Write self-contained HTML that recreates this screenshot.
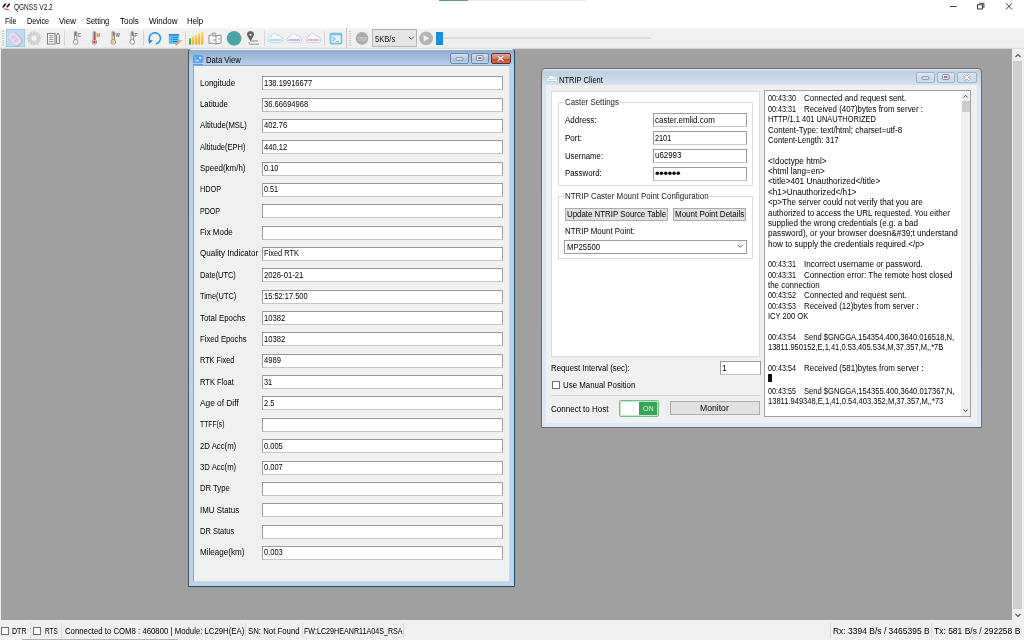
<!DOCTYPE html><html><head><meta charset="utf-8"><style>
*{box-sizing:border-box;margin:0;padding:0}
html,body{width:1024px;height:640px;overflow:hidden;background:#fff;font-family:"Liberation Sans",sans-serif;font-size:8.5px;letter-spacing:-0.25px;color:#000}
.a{position:absolute}
.t{position:absolute;white-space:nowrap;line-height:10px;height:10px;filter:grayscale(1)}
.inp{position:absolute;background:#fff;border:1px solid #9c9c9c;border-bottom-color:#c6c6c6}
.vs{position:absolute;width:1px;background:#dadada}
svg{position:absolute;overflow:visible}
</style></head><body>
<div class="a" style="left:0px;top:0px;width:1024px;height:28px;background:#fff"></div>
<div class="a" style="left:439px;top:0px;width:29px;height:1px;background:#5a9a80"></div>
<div class="a" style="left:468px;top:0px;width:118px;height:1px;background:#e6e6e6"></div>
<div class="a" style="left:0px;top:28px;width:1024px;height:21px;background:linear-gradient(#f7f7f7,#f0f0f0 2px,#f0f0f0 19px,#d8d8d8)"></div>
<div class="a" style="left:1px;top:49px;width:1011px;height:571px;background:#a0a0a0"></div>
<div class="a" style="left:0px;top:49px;width:1px;height:571px;background:#f0f0f0"></div>
<div class="a" style="left:1012px;top:49px;width:12px;height:571px;background:#f0f0f0"></div>
<div class="a" style="left:1013px;top:61px;width:9px;height:548px;background:#cdcdcd"></div>
<svg style="left:1012px;top:49px" width="12" height="571" viewBox="0 0 12 571"><path d="M3.5 8 L6 5.5 L8.5 8" fill="none" stroke="#555" stroke-width="1.2"/><path d="M3.5 565 L6 567.5 L8.5 565" fill="none" stroke="#555" stroke-width="1.2"/></svg>
<div class="a" style="left:0px;top:620px;width:1024px;height:20px;background:#f0f0f0"></div>
<div class="a" style="left:22px;top:639px;width:156px;height:1px;background:#b4b4b4"></div>
<svg style="left:1px;top:2px" width="11" height="9" viewBox="0 0 11 9"><path d="M1 5.6 L3.2 2.2 Q3.6 1.6 4.4 1.6 L5.6 1.6 L3 5.6 Z" fill="#111"/><path d="M5.2 5 L7.2 1.9 Q7.5 1.5 8.2 1.5 L8.8 1.5 Q9.4 1.7 9 2.4 L7.4 4.8 Q7 5.4 6.2 5.4 Z" fill="#111"/><path d="M2.6 6.2 Q6 6.3 9.8 8.6 Q6.5 8 3.6 7.4 Z" fill="#e82020"/></svg>
<div class="t" style="left:13.90px;top:1.65px;font-size:8.4px;color:#111;letter-spacing:0;transform:scaleX(0.7769);transform-origin:0 0">QGNSS V2.2</div>
<svg style="left:940px;top:0px" width="84" height="14" viewBox="0 0 84 14"><path d="M10 6.5 H16.7" stroke="#222" stroke-width="0.9"/><path d="M39.2 3.3 h4.7 v4.6" fill="none" stroke="#222" stroke-width="0.9"/><rect x="37.5" y="4.8" width="5" height="4.2" fill="none" stroke="#222" stroke-width="0.9"/><path d="M66 3.3 L72 9.4 M72 3.3 L66 9.4" stroke="#222" stroke-width="0.9"/></svg>
<div class="t" style="left:4.70px;top:15.65px;color:#000;letter-spacing:0;transform:scaleX(0.8319);transform-origin:0 0">File</div>
<div class="t" style="left:26.80px;top:15.65px;color:#000;letter-spacing:0;transform:scaleX(0.8505);transform-origin:0 0">Device</div>
<div class="t" style="left:58.90px;top:15.65px;color:#000;letter-spacing:0;transform:scaleX(0.9190);transform-origin:0 0">View</div>
<div class="t" style="left:85.80px;top:15.65px;color:#000;letter-spacing:0;transform:scaleX(0.8765);transform-origin:0 0">Setting</div>
<div class="t" style="left:119.80px;top:15.65px;color:#000;letter-spacing:0;transform:scaleX(0.9524);transform-origin:0 0">Tools</div>
<div class="t" style="left:148.80px;top:15.65px;color:#000;letter-spacing:0;transform:scaleX(0.9426);transform-origin:0 0">Window</div>
<div class="t" style="left:186.90px;top:15.65px;color:#000;letter-spacing:0;transform:scaleX(0.9265);transform-origin:0 0">Help</div>
<svg style="left:1px;top:29px" width="4" height="19" viewBox="0 0 4 19"><rect x="1.5" y="2.0" width="1.2" height="1" fill="#a8a8a8"/><rect x="1.5" y="4.3" width="1.2" height="1" fill="#a8a8a8"/><rect x="1.5" y="6.6" width="1.2" height="1" fill="#a8a8a8"/><rect x="1.5" y="8.9" width="1.2" height="1" fill="#a8a8a8"/><rect x="1.5" y="11.2" width="1.2" height="1" fill="#a8a8a8"/><rect x="1.5" y="13.5" width="1.2" height="1" fill="#a8a8a8"/><rect x="1.5" y="15.8" width="1.2" height="1" fill="#a8a8a8"/></svg>
<svg style="left:348px;top:29px" width="4" height="19" viewBox="0 0 4 19"><rect x="1.5" y="2.0" width="1.2" height="1" fill="#a8a8a8"/><rect x="1.5" y="4.3" width="1.2" height="1" fill="#a8a8a8"/><rect x="1.5" y="6.6" width="1.2" height="1" fill="#a8a8a8"/><rect x="1.5" y="8.9" width="1.2" height="1" fill="#a8a8a8"/><rect x="1.5" y="11.2" width="1.2" height="1" fill="#a8a8a8"/><rect x="1.5" y="13.5" width="1.2" height="1" fill="#a8a8a8"/><rect x="1.5" y="15.8" width="1.2" height="1" fill="#a8a8a8"/></svg>
<div class="a" style="left:6px;top:29px;width:19px;height:18px;background:#c4dcf2;border:1px solid #9dccf3"></div>
<svg style="left:7px;top:31px" width="17" height="16" viewBox="0 0 17 16"><g transform="rotate(-42 8.5 8)"><rect x="3.6" y="1" width="9.8" height="14.5" rx="3.6" fill="#b8b2cc"/><rect x="3.6" y="0.6" width="9" height="13.6" rx="3.4" fill="#e6e3f0" stroke="#c4bfd6" stroke-width="0.5"/><rect x="5.8" y="3.6" width="4.6" height="3.2" rx="0.6" fill="#d2cde2"/><rect x="5.8" y="8" width="4.6" height="3.2" rx="0.6" fill="#d2cde2"/></g></svg>
<svg style="left:27px;top:31px" width="15" height="15" viewBox="0 0 15 15"><g transform="translate(7 7.35)"><rect x="-1.3" y="-7" width="2.6" height="3" fill="#cdcdcd" transform="rotate(0)"/><rect x="-1.3" y="-7" width="2.6" height="3" fill="#cdcdcd" transform="rotate(30)"/><rect x="-1.3" y="-7" width="2.6" height="3" fill="#cdcdcd" transform="rotate(60)"/><rect x="-1.3" y="-7" width="2.6" height="3" fill="#cdcdcd" transform="rotate(90)"/><rect x="-1.3" y="-7" width="2.6" height="3" fill="#cdcdcd" transform="rotate(120)"/><rect x="-1.3" y="-7" width="2.6" height="3" fill="#cdcdcd" transform="rotate(150)"/><rect x="-1.3" y="-7" width="2.6" height="3" fill="#cdcdcd" transform="rotate(180)"/><rect x="-1.3" y="-7" width="2.6" height="3" fill="#cdcdcd" transform="rotate(210)"/><rect x="-1.3" y="-7" width="2.6" height="3" fill="#cdcdcd" transform="rotate(240)"/><rect x="-1.3" y="-7" width="2.6" height="3" fill="#cdcdcd" transform="rotate(270)"/><rect x="-1.3" y="-7" width="2.6" height="3" fill="#cdcdcd" transform="rotate(300)"/><rect x="-1.3" y="-7" width="2.6" height="3" fill="#cdcdcd" transform="rotate(330)"/><circle r="5.3" fill="#d2d2d2"/><circle r="3.4" fill="#dcdcdc"/><circle r="2.4" fill="#f2f2f2"/></g></svg>
<svg style="left:46px;top:32px" width="15" height="13" viewBox="0 0 15 13"><rect x="1.5" y="1.5" width="7.5" height="10.5" fill="#fff" stroke="#7c7c7c" stroke-width="1"/><path d="M3 3.5 h4.5 M3 5.5 h4.5 M3 7.5 h4.5 M3 9.5 h4.5" stroke="#8a8a8a" stroke-width="0.9"/><path d="M10.5 3.5 L12 1 L13.5 3.5 V11.5 H10.5Z" fill="#e8e8e8" stroke="#7c7c7c" stroke-width="0.9"/></svg>
<div class="a" style="left:64px;top:31px;width:1px;height:15px;background:#d4d4d4"></div>
<div class="a" style="left:143px;top:31px;width:1px;height:15px;background:#d4d4d4"></div>
<div class="a" style="left:185px;top:31px;width:1px;height:15px;background:#d4d4d4"></div>
<div class="a" style="left:264px;top:31px;width:1px;height:15px;background:#d4d4d4"></div>
<div class="a" style="left:324px;top:31px;width:1px;height:15px;background:#d4d4d4"></div>
<div class="a" style="left:346px;top:28px;width:1px;height:20px;background:#c8c8c8"></div>
<svg style="left:70px;top:31px" width="70" height="15" viewBox="0 0 70 15"><rect x="4.3999999999999995" y="0.5" width="2.4" height="9" rx="1.2" fill="#fff" stroke="#777" stroke-width="0.8"/><rect x="5.1" y="1" width="1" height="4" fill="#666"/><circle cx="5.6" cy="11" r="2.3" fill="#fff" stroke="#777" stroke-width="0.8"/><text x="7.8" y="5.5" font-size="4.6" font-weight="bold" fill="#707070" letter-spacing="0" font-family="Liberation Sans">C</text><rect x="23.2" y="0.5" width="2.4" height="9" rx="1.2" fill="#fff" stroke="#777" stroke-width="0.8"/><rect x="23.9" y="1" width="1" height="4" fill="#666"/><rect x="23.9" y="5" width="1" height="5" fill="#e02020"/><circle cx="24.4" cy="11" r="2.3" fill="#fff" stroke="#777" stroke-width="0.8"/><circle cx="24.4" cy="11" r="1.2" fill="#e02020"/><text x="26.599999999999998" y="5.5" font-size="4.6" font-weight="bold" fill="#707070" letter-spacing="0" font-family="Liberation Sans">H</text><rect x="42.099999999999994" y="0.5" width="2.4" height="9" rx="1.2" fill="#fff" stroke="#777" stroke-width="0.8"/><rect x="42.8" y="1" width="1" height="4" fill="#666"/><rect x="42.8" y="5" width="1" height="5" fill="#f0c020"/><circle cx="43.3" cy="11" r="2.3" fill="#fff" stroke="#777" stroke-width="0.8"/><circle cx="43.3" cy="11" r="1.2" fill="#f0c020"/><text x="45.5" y="5.5" font-size="4.6" font-weight="bold" fill="#707070" letter-spacing="0" font-family="Liberation Sans">W</text><rect x="61.099999999999994" y="0.5" width="2.4" height="9" rx="1.2" fill="#fff" stroke="#777" stroke-width="0.8"/><rect x="61.8" y="1" width="1" height="4" fill="#666"/><circle cx="62.3" cy="11" r="2.3" fill="#fff" stroke="#777" stroke-width="0.8"/><text x="64.5" y="5.5" font-size="4.6" font-weight="bold" fill="#707070" letter-spacing="0" font-family="Liberation Sans">F</text></svg>
<svg style="left:147px;top:31px" width="16" height="15" viewBox="0 0 16 15"><path d="M8.77 12.86 A5.6 5.6 0 1 0 2.9 9.9" fill="none" stroke="#1e90dc" stroke-width="1.5"/><path d="M1.2 8.6 L5.8 9.6 L2.2 12.9 Z" fill="#1e90dc"/></svg>
<svg style="left:166px;top:31px" width="17" height="16" viewBox="0 0 17 16"><rect x="0.5" y="0.5" width="15" height="15" fill="#fbf0d8" opacity="0.45"/><rect x="2.8" y="3" width="10.2" height="10" rx="1" fill="#5cc6f4"/><rect x="2.8" y="3" width="10.2" height="1.6" fill="#3d7fe0"/><rect x="4.6" y="6" width="1.2" height="1" fill="#2f78c8"/><rect x="6.8" y="6" width="4.8" height="1" fill="#2f78c8"/><rect x="4.6" y="8" width="1.2" height="1" fill="#2f78c8"/><rect x="6.8" y="8" width="4.8" height="1" fill="#2f78c8"/><rect x="4.6" y="10" width="1.2" height="1" fill="#2f78c8"/><rect x="6.8" y="10" width="4.8" height="1" fill="#2f78c8"/><path d="M9.5 14.5 L14.5 9.5" stroke="#f0a040" stroke-width="1.6"/><path d="M14 10 L15 9" stroke="#f08aa0" stroke-width="1.6"/></svg>
<svg style="left:188px;top:31px" width="17" height="15" viewBox="0 0 17 15"><defs><linearGradient id="go" x1="0" y1="0" x2="0" y2="1"><stop offset="0" stop-color="#fcd94e"/><stop offset="1" stop-color="#f5a016"/></linearGradient><linearGradient id="gg" x1="0" y1="0" x2="0" y2="1"><stop offset="0" stop-color="#6ab04c"/><stop offset="1" stop-color="#2a9a3a"/></linearGradient></defs><rect x="1.1" y="7.0" width="2" height="6.8" rx="0.8" fill="url(#gg)"/><rect x="4.1" y="5.0" width="2" height="8.8" rx="0.8" fill="url(#go)"/><rect x="7.1" y="3.8" width="2" height="10.0" rx="0.8" fill="url(#go)"/><rect x="10.1" y="2.2" width="2" height="11.6" rx="0.8" fill="url(#go)"/><rect x="13.2" y="0.7" width="2" height="13.1" rx="0.8" fill="url(#go)"/></svg>
<svg style="left:208px;top:32px" width="15" height="13" viewBox="0 0 15 13"><path d="M1 3.5 L4.5 3 L8 4 L13 3 V11 L8 12 L4.5 11 L1 11.5Z" fill="#fff" stroke="#808080" stroke-width="0.9"/><path d="M8 4 V12 M4.5 8 L8 8 M10 7 h2" stroke="#808080" stroke-width="0.8"/><circle cx="6" cy="2.5" r="1.6" fill="#fff" stroke="#666" stroke-width="0.8"/></svg>
<svg style="left:226px;top:30px" width="17" height="17" viewBox="0 0 17 17"><circle cx="8.1" cy="8.35" r="7.3" fill="#4aa5a4"/></svg>
<svg style="left:246px;top:31px" width="15" height="15" viewBox="0 0 15 15"><path d="M4.5 10.3 L1.6 5.2 A3.4 3.4 0 1 1 7.4 5.2 Z" fill="#606060"/><circle cx="4.5" cy="3.8" r="1.1" fill="#f0f0f0"/><path d="M4 10 H12" stroke="#999" stroke-width="1.2"/><path d="M3.2 11.2 Q2.5 13.2 4 13.2 H13" fill="none" stroke="#888" stroke-width="0.9"/></svg>
<svg style="left:267px;top:33px" width="60" height="10" viewBox="0 0 60 10"><g transform="translate(0 0)"><g fill="#fff" stroke="#8fa2d8" stroke-width="1"><rect x="1.2" y="4.6" width="14.6" height="4.3" rx="2.15"/><circle cx="7.6" cy="4.2" r="3.1"/><circle cx="11.6" cy="5.3" r="2.3"/><circle cx="4.3" cy="5.7" r="1.9"/></g><g fill="#fff"><rect x="1.2" y="4.6" width="14.6" height="4.3" rx="2.15"/><circle cx="7.6" cy="4.2" r="3.1"/><circle cx="11.6" cy="5.3" r="2.3"/><circle cx="4.3" cy="5.7" r="1.9"/></g><path d="M2.6 6.9 H14.4" stroke="#3fb8ec" stroke-width="1.5" stroke-dasharray="1.2 0.45" opacity="0.9"/></g><g transform="translate(19 0)"><g fill="#fff" stroke="#8fa2d8" stroke-width="1"><rect x="1.2" y="4.6" width="14.6" height="4.3" rx="2.15"/><circle cx="7.6" cy="4.2" r="3.1"/><circle cx="11.6" cy="5.3" r="2.3"/><circle cx="4.3" cy="5.7" r="1.9"/></g><g fill="#fff"><rect x="1.2" y="4.6" width="14.6" height="4.3" rx="2.15"/><circle cx="7.6" cy="4.2" r="3.1"/><circle cx="11.6" cy="5.3" r="2.3"/><circle cx="4.3" cy="5.7" r="1.9"/></g><path d="M2.6 6.9 H14.4" stroke="#7a6ed8" stroke-width="1.5" stroke-dasharray="1.2 0.45" opacity="0.9"/></g><g transform="translate(38 0)"><g fill="#fff" stroke="#8fa2d8" stroke-width="1"><rect x="1.2" y="4.6" width="14.6" height="4.3" rx="2.15"/><circle cx="7.6" cy="4.2" r="3.1"/><circle cx="11.6" cy="5.3" r="2.3"/><circle cx="4.3" cy="5.7" r="1.9"/></g><g fill="#fff"><rect x="1.2" y="4.6" width="14.6" height="4.3" rx="2.15"/><circle cx="7.6" cy="4.2" r="3.1"/><circle cx="11.6" cy="5.3" r="2.3"/><circle cx="4.3" cy="5.7" r="1.9"/></g><path d="M2.6 6.9 H14.4" stroke="#d06a6a" stroke-width="1.5" stroke-dasharray="1.2 0.45" opacity="0.9"/></g></svg>
<svg style="left:329px;top:32px" width="14" height="13" viewBox="0 0 14 13"><rect x="1.5" y="1.5" width="11" height="10.2" rx="1.2" fill="none" stroke="#70c0ec" stroke-width="1.7"/><rect x="1.5" y="1.5" width="11" height="1.8" fill="#70c0ec"/><path d="M3.5 5 L6 7 L3.5 9" fill="none" stroke="#70c0ec" stroke-width="1.2"/><path d="M7.2 9.6 H10" stroke="#70c0ec" stroke-width="1"/></svg>
<svg style="left:355px;top:31px" width="15" height="15" viewBox="0 0 15 15"><circle cx="7" cy="7.35" r="6.3" fill="#aaaaaa"/><text x="2.4" y="9.5" font-size="5.8" font-weight="bold" fill="#d2d2d2" letter-spacing="0" textLength="9.4" lengthAdjust="spacingAndGlyphs" font-family="Liberation Sans">STOP</text></svg>
<div class="a" style="left:372px;top:29px;width:45px;height:18px;background:#e5e5e5;border:1px solid #b4b4b4"></div>
<div class="t" style="left:374.50px;top:33.95px;font-size:8.8px;color:#111;letter-spacing:0;transform:scaleX(0.8644);transform-origin:0 0">5KB/s</div>
<svg style="left:408px;top:36px" width="7" height="5" viewBox="0 0 7 5"><path d="M0.8 0.8 L3.3 3.3 L5.8 0.8" fill="none" stroke="#555" stroke-width="1"/></svg>
<svg style="left:418px;top:30px" width="16" height="17" viewBox="0 0 16 17"><circle cx="8.1" cy="8.35" r="6.9" fill="#b4b4b4"/><path d="M5.6 5 L11.2 8.35 L5.6 11.7Z" fill="#efefef"/></svg>
<div class="a" style="left:442px;top:37px;width:209px;height:2px;background:#dcdcdc"></div>
<div class="a" style="left:436px;top:32px;width:6.5px;height:13px;background:#1a8fdc"></div>
<div class="t" style="left:12.20px;top:625.75px;font-size:9.1px;letter-spacing:0;transform:scaleX(0.7753);transform-origin:0 0">DTR</div>
<div class="t" style="left:44.80px;top:625.75px;font-size:9.1px;letter-spacing:0;transform:scaleX(0.7043);transform-origin:0 0">RTS</div>
<div class="t" style="left:64.90px;top:625.75px;font-size:9.1px;letter-spacing:0;transform:scaleX(0.8554);transform-origin:0 0">Connected to COM8 : 460800 | Module: LC29H(EA)</div>
<div class="t" style="left:248.20px;top:625.75px;font-size:9.1px;letter-spacing:0;transform:scaleX(0.8578);transform-origin:0 0">SN: Not Found</div>
<div class="t" style="left:304.40px;top:625.75px;font-size:9.1px;letter-spacing:0;transform:scaleX(0.7856);transform-origin:0 0">FW:LC29HEANR11A04S_RSA</div>
<div class="t" style="left:833.40px;top:625.75px;font-size:9.1px;letter-spacing:0;transform:scaleX(0.9321);transform-origin:0 0">Rx: 3394 B/s / 3465395 B</div>
<div class="t" style="left:933.90px;top:625.75px;font-size:9.1px;letter-spacing:0;transform:scaleX(0.9328);transform-origin:0 0">Tx: 581 B/s / 292258 B</div>
<div class="vs" style="left:30px;top:623px;height:15px"></div>
<div class="vs" style="left:61px;top:623px;height:15px"></div>
<div class="vs" style="left:245px;top:623px;height:15px"></div>
<div class="vs" style="left:302px;top:623px;height:15px"></div>
<div class="vs" style="left:403px;top:623px;height:15px"></div>
<div class="vs" style="left:830px;top:623px;height:15px"></div>
<div class="vs" style="left:931px;top:623px;height:15px"></div>
<div class="a" style="left:1px;top:627px;width:8px;height:8px;background:#fff;border:1px solid #707070"></div>
<div class="a" style="left:33px;top:627px;width:8px;height:8px;background:#fff;border:1px solid #707070"></div>
<div class="a" style="left:188px;top:49px;width:327px;height:538px;background:linear-gradient(#f4f7fb,#f4f7fb 1px,#91adcf 1.5px,#b8d2ec 16px,#bad3ec 17px,#bcd4ec);border:1px solid #4a5560;border-top:0;border-right-color:#1f4f60;border-bottom-color:#1f4f60;border-radius:3px 3px 0 0"></div>
<div class="a" style="left:0px;top:48px;width:188px;height:1px;background:#d4d4d4"></div>
<div class="a" style="left:515px;top:48px;width:497px;height:1px;background:#d4d4d4"></div>
<div class="a" style="left:193px;top:65px;width:317px;height:517px;background:#f0f0f0;border:1px solid #9aa4b0;border-bottom-color:#c8d8e8;border-right-color:#c8d8e8"></div>
<div class="a" style="left:193px;top:63.5px;width:10px;height:1.5px;background:#5aa0f0"></div>
<svg style="left:193px;top:55px" width="10" height="8" viewBox="0 0 10 8"><rect x="0" y="0" width="10" height="8" rx="1.5" fill="#58a2f2"/><rect x="1.8" y="5.3" width="4.2" height="0.9" fill="#fff"/><rect x="6.3" y="2" width="1.8" height="1.8" fill="#fff"/><rect x="1.8" y="2" width="1" height="1.6" fill="#dfe" opacity="0.7"/></svg>
<div class="t" style="left:205.80px;top:54.65px;color:#000;font-size:8.6px;letter-spacing:0;transform:scaleX(0.8920);transform-origin:0 0">Data View</div>
<div class="a" style="left:450px;top:52.5px;width:19px;height:11px;background:linear-gradient(#d0e0f2,#b8cde6 50%,#a8c0de 51%,#bcd2ec);border:1px solid #6f87a8;border-radius:2px"></div>
<div class="a" style="left:470.7px;top:52.5px;width:18.5px;height:11px;background:linear-gradient(#d0e0f2,#b8cde6 50%,#a8c0de 51%,#bcd2ec);border:1px solid #6f87a8;border-radius:2px"></div>
<div class="a" style="left:491px;top:52.5px;width:19.5px;height:11px;background:linear-gradient(#e9a493,#d97a62 50%,#c5452a 51%,#d8694a);border:1px solid #5a3030;border-radius:2px"></div>
<svg style="left:450px;top:52.5px" width="60" height="11" viewBox="0 0 60 11"><rect x="6" y="4.7" width="7" height="2.6" rx="1" fill="#eef" stroke="#555" stroke-width="0.6"/><rect x="26.5" y="2.5" width="6.5" height="5" rx="1" fill="#eef" stroke="#555" stroke-width="0.6"/><rect x="28" y="4.2" width="3.5" height="1.6" fill="#667"/><path d="M47.8 3 L53.6 8 M53.6 3 L47.8 8" stroke="#444" stroke-width="2.4" opacity="0.55"/><path d="M47.8 3 L53.6 8 M53.6 3 L47.8 8" stroke="#fff" stroke-width="1.4"/></svg>
<div class="t" style="left:199.70px;top:77.65px;color:#000;letter-spacing:0;transform:scaleX(0.9426);transform-origin:0 0">Longitude</div>
<div class="inp" style="left:262px;top:76.20px;width:241px;height:14px"></div>
<div class="t" style="left:263.90px;top:77.65px;color:#000;letter-spacing:0;transform:scaleX(0.8846);transform-origin:0 0">138.19916677</div>
<div class="t" style="left:199.70px;top:99.00px;color:#000;letter-spacing:0;transform:scaleX(0.9223);transform-origin:0 0">Latitude</div>
<div class="inp" style="left:262px;top:97.55px;width:241px;height:14px"></div>
<div class="t" style="left:263.90px;top:99.00px;color:#000;letter-spacing:0;transform:scaleX(0.8904);transform-origin:0 0">36.66694968</div>
<div class="t" style="left:199.70px;top:120.35px;color:#000;letter-spacing:0;transform:scaleX(0.9107);transform-origin:0 0">Altitude(MSL)</div>
<div class="inp" style="left:262px;top:118.90px;width:241px;height:14px"></div>
<div class="t" style="left:263.90px;top:120.35px;color:#000;letter-spacing:0;transform:scaleX(0.8885);transform-origin:0 0">402.76</div>
<div class="t" style="left:199.70px;top:141.70px;color:#000;letter-spacing:0;transform:scaleX(0.8835);transform-origin:0 0">Altitude(EPH)</div>
<div class="inp" style="left:262px;top:140.25px;width:241px;height:14px"></div>
<div class="t" style="left:263.90px;top:141.70px;color:#000;letter-spacing:0;transform:scaleX(0.8885);transform-origin:0 0">440.12</div>
<div class="t" style="left:199.70px;top:163.05px;color:#000;letter-spacing:0;transform:scaleX(0.9348);transform-origin:0 0">Speed(km/h)</div>
<div class="inp" style="left:262px;top:161.60px;width:241px;height:14px"></div>
<div class="t" style="left:263.90px;top:163.05px;color:#000;letter-spacing:0;transform:scaleX(0.8642);transform-origin:0 0">0.10</div>
<div class="t" style="left:199.70px;top:184.40px;color:#000;letter-spacing:0;transform:scaleX(0.8590);transform-origin:0 0">HDOP</div>
<div class="inp" style="left:262px;top:182.95px;width:241px;height:14px"></div>
<div class="t" style="left:263.90px;top:184.40px;color:#000;letter-spacing:0;transform:scaleX(0.8400);transform-origin:0 0">0.51</div>
<div class="t" style="left:199.70px;top:205.75px;color:#000;letter-spacing:0;transform:scaleX(0.8342);transform-origin:0 0">PDOP</div>
<div class="inp" style="left:262px;top:204.30px;width:241px;height:14px"></div>
<div class="t" style="left:199.70px;top:227.10px;color:#000;letter-spacing:0;transform:scaleX(0.9380);transform-origin:0 0">Fix Mode</div>
<div class="inp" style="left:262px;top:225.65px;width:241px;height:14px"></div>
<div class="t" style="left:199.70px;top:248.45px;color:#000;letter-spacing:0;transform:scaleX(0.9475);transform-origin:0 0">Quality Indicator</div>
<div class="inp" style="left:262px;top:247.00px;width:241px;height:14px"></div>
<div class="t" style="left:263.90px;top:248.45px;color:#000;letter-spacing:0;transform:scaleX(0.8750);transform-origin:0 0">Fixed RTK</div>
<div class="t" style="left:199.70px;top:269.80px;color:#000;letter-spacing:0;transform:scaleX(0.8712);transform-origin:0 0">Date(UTC)</div>
<div class="inp" style="left:262px;top:268.35px;width:241px;height:14px"></div>
<div class="t" style="left:263.90px;top:269.80px;color:#000;letter-spacing:0;transform:scaleX(0.9038);transform-origin:0 0">2026-01-21</div>
<div class="t" style="left:199.70px;top:291.15px;color:#000;letter-spacing:0;transform:scaleX(0.8680);transform-origin:0 0">Time(UTC)</div>
<div class="inp" style="left:262px;top:289.70px;width:241px;height:14px"></div>
<div class="t" style="left:263.90px;top:291.15px;color:#000;letter-spacing:0;transform:scaleX(0.8783);transform-origin:0 0">15:52:17.500</div>
<div class="t" style="left:199.70px;top:312.50px;color:#000;letter-spacing:0;transform:scaleX(0.9307);transform-origin:0 0">Total Epochs</div>
<div class="inp" style="left:262px;top:311.05px;width:241px;height:14px"></div>
<div class="t" style="left:263.90px;top:312.50px;color:#000;letter-spacing:0;transform:scaleX(0.8968);transform-origin:0 0">10382</div>
<div class="t" style="left:199.70px;top:333.85px;color:#000;letter-spacing:0;transform:scaleX(0.9029);transform-origin:0 0">Fixed Epochs</div>
<div class="inp" style="left:262px;top:332.40px;width:241px;height:14px"></div>
<div class="t" style="left:263.90px;top:333.85px;color:#000;letter-spacing:0;transform:scaleX(0.8968);transform-origin:0 0">10382</div>
<div class="t" style="left:199.70px;top:355.20px;color:#000;letter-spacing:0;transform:scaleX(0.8600);transform-origin:0 0">RTK Fixed</div>
<div class="inp" style="left:262px;top:353.75px;width:241px;height:14px"></div>
<div class="t" style="left:263.90px;top:355.20px;color:#000;letter-spacing:0;transform:scaleX(0.8931);transform-origin:0 0">4989</div>
<div class="t" style="left:199.70px;top:376.55px;color:#000;letter-spacing:0;transform:scaleX(0.8869);transform-origin:0 0">RTK Float</div>
<div class="inp" style="left:262px;top:375.10px;width:241px;height:14px"></div>
<div class="t" style="left:263.90px;top:376.55px;color:#000;letter-spacing:0;transform:scaleX(0.8554);transform-origin:0 0">31</div>
<div class="t" style="left:199.70px;top:397.90px;color:#000;letter-spacing:0;transform:scaleX(0.9786);transform-origin:0 0">Age of Diff</div>
<div class="inp" style="left:262px;top:396.45px;width:241px;height:14px"></div>
<div class="t" style="left:263.90px;top:397.90px;color:#000;letter-spacing:0;transform:scaleX(0.8793);transform-origin:0 0">2.5</div>
<div class="t" style="left:199.70px;top:419.25px;color:#000;letter-spacing:0;transform:scaleX(0.7951);transform-origin:0 0">TTFF(s)</div>
<div class="inp" style="left:262px;top:417.80px;width:241px;height:14px"></div>
<div class="t" style="left:199.70px;top:440.60px;color:#000;letter-spacing:0;transform:scaleX(0.9125);transform-origin:0 0">2D Acc(m)</div>
<div class="inp" style="left:262px;top:439.15px;width:241px;height:14px"></div>
<div class="t" style="left:263.90px;top:440.60px;color:#000;letter-spacing:0;transform:scaleX(0.8834);transform-origin:0 0">0.005</div>
<div class="t" style="left:199.70px;top:461.95px;color:#000;letter-spacing:0;transform:scaleX(0.9125);transform-origin:0 0">3D Acc(m)</div>
<div class="inp" style="left:262px;top:460.50px;width:241px;height:14px"></div>
<div class="t" style="left:263.90px;top:461.95px;color:#000;letter-spacing:0;transform:scaleX(0.8834);transform-origin:0 0">0.007</div>
<div class="t" style="left:199.70px;top:483.30px;color:#000;letter-spacing:0;transform:scaleX(0.9021);transform-origin:0 0">DR Type</div>
<div class="inp" style="left:262px;top:481.85px;width:241px;height:14px"></div>
<div class="t" style="left:199.70px;top:504.65px;color:#000;letter-spacing:0;transform:scaleX(0.9299);transform-origin:0 0">IMU Status</div>
<div class="inp" style="left:262px;top:503.20px;width:241px;height:14px"></div>
<div class="t" style="left:199.70px;top:526.00px;color:#000;letter-spacing:0;transform:scaleX(0.8826);transform-origin:0 0">DR Status</div>
<div class="inp" style="left:262px;top:524.55px;width:241px;height:14px"></div>
<div class="t" style="left:199.70px;top:547.35px;color:#000;letter-spacing:0;transform:scaleX(0.9526);transform-origin:0 0">Mileage(km)</div>
<div class="inp" style="left:262px;top:545.90px;width:241px;height:14px"></div>
<div class="t" style="left:263.90px;top:547.35px;color:#000;letter-spacing:0;transform:scaleX(0.8834);transform-origin:0 0">0.003</div>
<div class="a" style="left:541px;top:68px;width:441px;height:360px;background:linear-gradient(#dde6f0,#dde6f0 1px,#bfcfdd 2px,#d6e2ee 16px,#d9e5f2 17px,#dce8f4);border:1px solid #6e6e6e;border-radius:4px 4px 0 0"></div>
<div class="a" style="left:546px;top:85px;width:431px;height:338px;background:#f0f0f0"></div>
<svg style="left:545.5px;top:74.5px" width="12" height="8" viewBox="0 0 12 8"><g transform="scale(0.7)"><g transform="translate(0 0)"><g fill="#fff" stroke="#8fa2d8" stroke-width="1"><rect x="1.2" y="4.6" width="14.6" height="4.3" rx="2.15"/><circle cx="7.6" cy="4.2" r="3.1"/><circle cx="11.6" cy="5.3" r="2.3"/><circle cx="4.3" cy="5.7" r="1.9"/></g><g fill="#fff"><rect x="1.2" y="4.6" width="14.6" height="4.3" rx="2.15"/><circle cx="7.6" cy="4.2" r="3.1"/><circle cx="11.6" cy="5.3" r="2.3"/><circle cx="4.3" cy="5.7" r="1.9"/></g><path d="M2.6 6.9 H14.4" stroke="#5ab8ee" stroke-width="1.5" stroke-dasharray="1.2 0.45" opacity="0.9"/></g></g></svg>
<div class="t" style="left:558.90px;top:74.65px;color:#000;font-size:8.6px;letter-spacing:0;transform:scaleX(0.8780);transform-origin:0 0">NTRIP Client</div>
<div class="a" style="left:916px;top:72px;width:19px;height:11px;background:linear-gradient(#dce7f3,#cfdcec 50%,#c6d5e8 51%,#d2e0ef);border:1px solid #9fb2c9;border-radius:2px"></div>
<div class="a" style="left:936.7px;top:72px;width:18.5px;height:11px;background:linear-gradient(#dce7f3,#cfdcec 50%,#c6d5e8 51%,#d2e0ef);border:1px solid #9fb2c9;border-radius:2px"></div>
<div class="a" style="left:957px;top:72px;width:19.5px;height:11px;background:linear-gradient(#dce7f3,#cfdcec 50%,#c6d5e8 51%,#d2e0ef);border:1px solid #9fb2c9;border-radius:2px"></div>
<svg style="left:916px;top:72px" width="60" height="11" viewBox="0 0 60 11"><rect x="6" y="4.7" width="7" height="2.6" rx="1" fill="#eef" stroke="#555" stroke-width="0.6"/><rect x="26.5" y="2.5" width="6.5" height="5" rx="1" fill="#eef" stroke="#555" stroke-width="0.6"/><rect x="28" y="4.2" width="3.5" height="1.6" fill="#667"/><path d="M47.8 3 L53.6 8 M53.6 3 L47.8 8" stroke="#444" stroke-width="2.4" opacity="0.45"/><path d="M47.8 3 L53.6 8 M53.6 3 L47.8 8" stroke="#fff" stroke-width="1.4"/></svg>
<div class="a" style="left:551px;top:91px;width:209px;height:266px;background:#fff;border:1px solid #dcdcdc"></div>
<div class="a" style="left:558px;top:102px;width:195px;height:84px;border:1px solid #dcdcdc"></div>
<div class="a" style="left:558px;top:196px;width:195px;height:63px;border:1px solid #dcdcdc"></div>
<div class="t" style="left:563.60px;top:96.65px;background:#fff;padding:0 1px;color:#222;letter-spacing:0;transform:scaleX(0.9290);transform-origin:0 0">Caster Settings</div>
<div class="t" style="left:563.60px;top:190.65px;background:#fff;padding:0 1px;color:#222;letter-spacing:0;transform:scaleX(0.9368);transform-origin:0 0">NTRIP Caster Mount Point Configuration</div>
<div class="t" style="left:564.60px;top:114.65px;color:#000;letter-spacing:0;transform:scaleX(0.9420);transform-origin:0 0">Address:</div>
<div class="t" style="left:564.60px;top:132.65px;color:#000;letter-spacing:0;transform:scaleX(0.9469);transform-origin:0 0">Port:</div>
<div class="t" style="left:564.60px;top:150.65px;color:#000;letter-spacing:0;transform:scaleX(0.9163);transform-origin:0 0">Username:</div>
<div class="t" style="left:564.60px;top:168.15px;color:#000;letter-spacing:0;transform:scaleX(0.9247);transform-origin:0 0">Password:</div>
<div class="inp" style="left:653px;top:113px;width:94px;height:14px"></div>
<div class="t" style="left:654.60px;top:114.65px;color:#000;letter-spacing:0;transform:scaleX(0.9376);transform-origin:0 0">caster.emlid.com</div>
<div class="inp" style="left:653px;top:131px;width:94px;height:14px"></div>
<div class="t" style="left:654.60px;top:132.65px;color:#000;letter-spacing:0;transform:scaleX(0.8562);transform-origin:0 0">2101</div>
<div class="inp" style="left:653px;top:148.5px;width:94px;height:14px"></div>
<div class="t" style="left:654.60px;top:150.15px;color:#000;letter-spacing:0;transform:scaleX(0.9269);transform-origin:0 0">u62993</div>
<div class="inp" style="left:653px;top:166.5px;width:94px;height:14px"></div>
<svg style="left:655px;top:170px" width="30" height="6" viewBox="0 0 30 6"><circle cx="2.3" cy="3.2" r="1.8" fill="#111"/><circle cx="6.5" cy="3.2" r="1.8" fill="#111"/><circle cx="10.7" cy="3.2" r="1.8" fill="#111"/><circle cx="14.9" cy="3.2" r="1.8" fill="#111"/><circle cx="19.1" cy="3.2" r="1.8" fill="#111"/><circle cx="23.3" cy="3.2" r="1.8" fill="#111"/></svg>
<div class="a" style="left:565px;top:207.5px;width:103px;height:13.5px;background:#e1e1e1;border:1px solid #adadad"></div>
<div class="t" style="left:566.90px;top:208.65px;color:#000;letter-spacing:0;transform:scaleX(0.9266);transform-origin:0 0">Update NTRIP Source Table</div>
<div class="a" style="left:673px;top:207.5px;width:73px;height:13.5px;background:#e1e1e1;border:1px solid #adadad"></div>
<div class="t" style="left:674.90px;top:208.65px;color:#000;letter-spacing:0;transform:scaleX(0.9403);transform-origin:0 0">Mount Point Details</div>
<div class="t" style="left:564.60px;top:225.65px;color:#000;letter-spacing:0;transform:scaleX(0.9266);transform-origin:0 0">NTRIP Mount Point:</div>
<div class="a" style="left:564px;top:240px;width:183px;height:14px;background:#fff;border:1px solid #9c9c9c"></div>
<div class="t" style="left:567.40px;top:241.65px;color:#000;letter-spacing:0;transform:scaleX(0.9068);transform-origin:0 0">MP25500</div>
<svg style="left:737px;top:244px" width="7" height="5" viewBox="0 0 7 5"><path d="M0.8 0.8 L3.3 3.3 L5.8 0.8" fill="none" stroke="#555" stroke-width="0.9"/></svg>
<div class="t" style="left:551.40px;top:362.65px;color:#000;letter-spacing:0;transform:scaleX(0.9215);transform-origin:0 0">Request Interval (sec):</div>
<div class="inp" style="left:720px;top:361px;width:41px;height:14px"></div>
<div class="t" style="left:722.10px;top:362.65px;color:#000">1</div>
<div class="a" style="left:551.5px;top:381.2px;width:8.3px;height:7.4px;background:#fff;border:1px solid #707070"></div>
<div class="t" style="left:562.60px;top:379.65px;color:#000;letter-spacing:0;transform:scaleX(0.9286);transform-origin:0 0">Use Manual Position</div>
<div class="a" style="left:551px;top:395px;width:210px;height:1px;background:#d4d4d4"></div>
<div class="t" style="left:551.40px;top:403.65px;color:#000;letter-spacing:0;transform:scaleX(0.9433);transform-origin:0 0">Connect to Host</div>
<div class="a" style="left:618.7px;top:400.4px;width:40px;height:16.4px;background:#fff;border:1px solid #6cbf84;box-shadow:inset 0 0 0 1px #c4e6cd;border-radius:1.5px"></div>
<div class="a" style="left:639px;top:402px;width:18.2px;height:13px;background:#36a354"></div>
<div class="t" style="left:642.90px;top:403.85px;color:#d8f0dc;font-size:7.2px;letter-spacing:0">ON</div>
<div class="a" style="left:670px;top:401.3px;width:90px;height:14px;background:#e1e1e1;border:1px solid #adadad"></div>
<div class="t" style="left:700.40px;top:402.65px;color:#000;letter-spacing:0;transform:scaleX(1.0161);transform-origin:0 0">Monitor</div>
<div class="a" style="left:764px;top:90px;width:207px;height:327px;background:#fff;border:1px solid #a0a0a0"></div>
<div class="a" style="left:961px;top:91px;width:9px;height:325px;background:#f0f0f0"></div>
<div class="a" style="left:961.5px;top:101px;width:8px;height:10.5px;background:#cdcdcd"></div>
<svg style="left:961px;top:91px" width="9" height="325" viewBox="0 0 9 325"><path d="M2.3 6.5 L4.5 4.3 L6.7 6.5" fill="none" stroke="#555" stroke-width="1"/><path d="M2.3 318.5 L4.5 320.7 L6.7 318.5" fill="none" stroke="#555" stroke-width="1"/></svg>
<div class="t" style="left:767.60px;top:93.45px;color:#000;letter-spacing:0;transform:scaleX(0.8431);transform-origin:0 0">00:43:30</div>
<div class="t" style="left:803.90px;top:93.45px;color:#000;letter-spacing:0;transform:scaleX(0.9361);transform-origin:0 0">Connected and request sent.</div>
<div class="t" style="left:767.60px;top:103.82px;color:#000;letter-spacing:0;transform:scaleX(0.8431);transform-origin:0 0">00:43:31</div>
<div class="t" style="left:803.90px;top:103.82px;color:#000;letter-spacing:0;transform:scaleX(0.9295);transform-origin:0 0">Received (407)bytes from server :</div>
<div class="t" style="left:767.60px;top:114.19px;color:#000;letter-spacing:0;transform:scaleX(0.8786);transform-origin:0 0">HTTP/1.1 401 UNAUTHORIZED</div>
<div class="t" style="left:767.60px;top:124.56px;color:#000;letter-spacing:0;transform:scaleX(0.9421);transform-origin:0 0">Content-Type: text/html; charset=utf-8</div>
<div class="t" style="left:767.60px;top:134.93px;color:#000;letter-spacing:0;transform:scaleX(0.9095);transform-origin:0 0">Content-Length: 317</div>
<div class="t" style="left:767.60px;top:155.67px;color:#000;letter-spacing:0;transform:scaleX(0.9688);transform-origin:0 0">&lt;!doctype html&gt;</div>
<div class="t" style="left:767.60px;top:166.04px;color:#000;letter-spacing:0;transform:scaleX(0.9653);transform-origin:0 0">&lt;html lang=en&gt;</div>
<div class="t" style="left:767.60px;top:176.41px;color:#000;letter-spacing:0;transform:scaleX(0.9691);transform-origin:0 0">&lt;title&gt;401 Unauthorized&lt;/title&gt;</div>
<div class="t" style="left:767.60px;top:186.78px;color:#000;letter-spacing:0;transform:scaleX(0.9652);transform-origin:0 0">&lt;h1&gt;Unauthorized&lt;/h1&gt;</div>
<div class="t" style="left:767.60px;top:197.15px;color:#000;letter-spacing:0;transform:scaleX(0.9552);transform-origin:0 0">&lt;p&gt;The server could not verify that you are</div>
<div class="t" style="left:767.60px;top:207.52px;color:#000;letter-spacing:0;transform:scaleX(0.9376);transform-origin:0 0">authorized to access the URL requested. You either</div>
<div class="t" style="left:767.60px;top:217.89px;color:#000;letter-spacing:0;transform:scaleX(0.9510);transform-origin:0 0">supplied the wrong credentials (e.g. a bad</div>
<div class="t" style="left:767.60px;top:228.26px;color:#000;letter-spacing:0;transform:scaleX(0.9587);transform-origin:0 0">password), or your browser doesn&amp;#39;t understand</div>
<div class="t" style="left:767.60px;top:238.63px;color:#000;letter-spacing:0;transform:scaleX(0.9634);transform-origin:0 0">how to supply the credentials required.&lt;/p&gt;</div>
<div class="t" style="left:767.60px;top:259.37px;color:#000;letter-spacing:0;transform:scaleX(0.8431);transform-origin:0 0">00:43:31</div>
<div class="t" style="left:803.90px;top:259.37px;color:#000;letter-spacing:0;transform:scaleX(0.9561);transform-origin:0 0">Incorrect username or password.</div>
<div class="t" style="left:767.60px;top:269.74px;color:#000;letter-spacing:0;transform:scaleX(0.8431);transform-origin:0 0">00:43:31</div>
<div class="t" style="left:803.90px;top:269.74px;color:#000;letter-spacing:0;transform:scaleX(0.9483);transform-origin:0 0">Connection error: The remote host closed</div>
<div class="t" style="left:767.60px;top:280.11px;color:#000;letter-spacing:0;transform:scaleX(0.9331);transform-origin:0 0">the connection</div>
<div class="t" style="left:767.60px;top:290.48px;color:#000;letter-spacing:0;transform:scaleX(0.8431);transform-origin:0 0">00:43:52</div>
<div class="t" style="left:803.90px;top:290.48px;color:#000;letter-spacing:0;transform:scaleX(0.9398);transform-origin:0 0">Connected and request sent.</div>
<div class="t" style="left:767.60px;top:300.85px;color:#000;letter-spacing:0;transform:scaleX(0.8431);transform-origin:0 0">00:43:53</div>
<div class="t" style="left:803.90px;top:300.85px;color:#000;letter-spacing:0;transform:scaleX(0.9311);transform-origin:0 0">Received (12)bytes from server :</div>
<div class="t" style="left:767.60px;top:311.22px;color:#000;letter-spacing:0;transform:scaleX(0.8893);transform-origin:0 0">ICY 200 OK</div>
<div class="t" style="left:767.60px;top:331.96px;color:#000;letter-spacing:0;transform:scaleX(0.8431);transform-origin:0 0">00:43:54</div>
<div class="t" style="left:803.90px;top:331.96px;color:#000;letter-spacing:0;transform:scaleX(0.8896);transform-origin:0 0">Send $GNGGA,154354.400,3640.016518,N,</div>
<div class="t" style="left:767.60px;top:342.33px;color:#000;letter-spacing:0;transform:scaleX(0.8838);transform-origin:0 0">13811.950152,E,1,41,0.53,405.534,M,37.357,M,,*7B</div>
<div class="t" style="left:767.60px;top:363.07px;color:#000;letter-spacing:0;transform:scaleX(0.8431);transform-origin:0 0">00:43:54</div>
<div class="t" style="left:803.90px;top:363.07px;color:#000;letter-spacing:0;transform:scaleX(0.9341);transform-origin:0 0">Received (581)bytes from server :</div>
<div class="t" style="left:767.60px;top:385.61px;color:#000;letter-spacing:0;transform:scaleX(0.8431);transform-origin:0 0">00:43:55</div>
<div class="t" style="left:803.90px;top:385.61px;color:#000;letter-spacing:0;transform:scaleX(0.8914);transform-origin:0 0">Send $GNGGA,154355.400,3640.017367,N,</div>
<div class="t" style="left:767.60px;top:395.98px;color:#000;letter-spacing:0;transform:scaleX(0.8881);transform-origin:0 0">13811.949348,E,1,41,0.54,403.352,M,37.357,M,,*73</div>
<div class="a" style="left:768px;top:374px;width:4px;height:8px;background:#111"></div>
</body></html>
